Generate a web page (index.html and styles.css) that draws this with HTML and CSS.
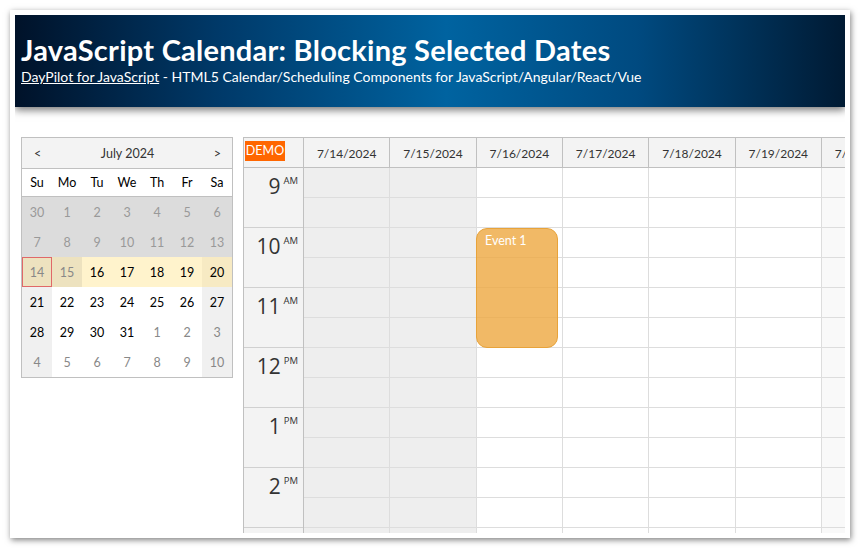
FILE: index.html
```html
<!DOCTYPE html>
<html>
<head>
<meta charset="utf-8">
<link rel="stylesheet" href="styles.css">
</head>
<body>
<div class="frame">
  <div class="viewport">
    <header class="header">
      <h1 class="title">JavaScript Calendar: Blocking Selected Dates</h1>
      <div class="subtitle"><a href="#">DayPilot for JavaScript</a> - HTML5 Calendar/Scheduling Components for JavaScript/Angular/React/Vue</div>
    </header>
    <main class="main">
      <div class="nav">
        <div class="nav-title"><span>&lt;</span><span>July 2024</span><span>&gt;</span></div>
        <div class="nav-days">
          <span>Su</span><span>Mo</span><span>Tu</span><span>We</span><span>Th</span><span>Fr</span><span>Sa</span>
        </div>
        <div class="nav-grid">
          <span class="dis">30</span><span class="dis">1</span><span class="dis">2</span><span class="dis">3</span><span class="dis">4</span><span class="dis">5</span><span class="dis">6</span>
          <span class="dis">7</span><span class="dis">8</span><span class="dis">9</span><span class="dis">10</span><span class="dis">11</span><span class="dis">12</span><span class="dis">13</span>
          <span class="sel-past today">14</span><span class="sel-past">15</span><span class="sel">16</span><span class="sel">17</span><span class="sel">18</span><span class="sel">19</span><span class="sel-we">20</span>
          <span class="we">21</span><span>22</span><span>23</span><span>24</span><span>25</span><span>26</span><span class="we">27</span>
          <span class="we">28</span><span>29</span><span>30</span><span>31</span><span class="other">1</span><span class="other">2</span><span class="we other">3</span>
          <span class="we other">4</span><span class="other">5</span><span class="other">6</span><span class="other">7</span><span class="other">8</span><span class="other">9</span><span class="we other">10</span>
        </div>
      </div>
      <div class="cal">
        <div class="cal-head">
          <div class="corner"><span class="demo">DEMO</span></div>
          <div class="colhead">7/14/2024</div>
          <div class="colhead">7/15/2024</div>
          <div class="colhead">7/16/2024</div>
          <div class="colhead">7/17/2024</div>
          <div class="colhead">7/18/2024</div>
          <div class="colhead">7/19/2024</div>
          <div class="colhead">7/20/2024</div>
        </div>
        <div class="cal-body">
          <div class="times">
            <div class="hour"><span class="h">9</span><span class="ap">AM</span></div>
            <div class="hour"><span class="h">10</span><span class="ap">AM</span></div>
            <div class="hour"><span class="h">11</span><span class="ap">AM</span></div>
            <div class="hour"><span class="h">12</span><span class="ap">PM</span></div>
            <div class="hour"><span class="h">1</span><span class="ap">PM</span></div>
            <div class="hour"><span class="h">2</span><span class="ap">PM</span></div>
            <div class="hour"><span class="h">3</span><span class="ap">PM</span></div>
          </div>
          <div class="day blocked"><i></i><i></i><i></i><i></i><i></i><i></i><i></i><i></i><i></i><i></i><i></i><i></i><i></i><i></i></div>
          <div class="day blocked"><i></i><i></i><i></i><i></i><i></i><i></i><i></i><i></i><i></i><i></i><i></i><i></i><i></i><i></i></div>
          <div class="day"><i></i><i></i><i></i><i></i><i></i><i></i><i></i><i></i><i></i><i></i><i></i><i></i><i></i><i></i>
            <div class="event">Event 1</div>
          </div>
          <div class="day"><i></i><i></i><i></i><i></i><i></i><i></i><i></i><i></i><i></i><i></i><i></i><i></i><i></i><i></i></div>
          <div class="day"><i></i><i></i><i></i><i></i><i></i><i></i><i></i><i></i><i></i><i></i><i></i><i></i><i></i><i></i></div>
          <div class="day"><i></i><i></i><i></i><i></i><i></i><i></i><i></i><i></i><i></i><i></i><i></i><i></i><i></i><i></i></div>
          <div class="day weekend"><i></i><i></i><i></i><i></i><i></i><i></i><i></i><i></i><i></i><i></i><i></i><i></i><i></i><i></i></div>
        </div>
      </div>
    </main>
  </div>
</div>
</body>
</html>
```

FILE: styles.css
```css
* { box-sizing: border-box; }
html, body { margin: 0; padding: 0; background: #fff; }
body { font-family: "Lato", "Open Sans", sans-serif; color: #333; }

.frame {
  margin: 10px;
  width: 840px;
  height: 528px;
  padding: 5px;
  background: #fff;
  box-shadow: 1px 2px 6px rgba(0,0,0,0.5);
}
.viewport {
  width: 830px;
  height: 518px;
  overflow: hidden;
}

.header {
  position: relative;
  z-index: 1;
  height: 92px;
  padding: 17px 0 0 6px;
  color: #fff;
  background: linear-gradient(90deg, #001229 0%, #003a6a 25%, #0063a0 52%, #004a80 75%, #001a33 100%);
  box-shadow: 0 3px 8px rgba(0,0,0,0.55);
}
.title {
  margin: 0;
  font-size: 29px;
  line-height: 35px;
  font-weight: 700;
  letter-spacing: 0.25px;
}
.subtitle {
  margin-top: 1px;
  font-size: 14px;
  line-height: 18px;
}
.subtitle a { color: #fff; }

.main {
  display: flex;
  align-items: flex-start;
  gap: 10px;
  padding: 30px 0 0 6px;
}

/* navigator */
.nav {
  width: 212px;
  border: 1px solid #c0c0c0;
  font-size: 12.5px;
}
.nav-title {
  height: 31px;
  display: flex;
  align-items: center;
  justify-content: space-between;
  padding: 0 11px 0 12px;
  background: #f3f3f3;
  border-bottom: 1px solid #c0c0c0;
  color: #333;
}
.nav-days {
  display: grid;
  grid-template-columns: repeat(7, 30px);
  height: 28px;
  border-bottom: 1px solid #c0c0c0;
  background: #fff;
}
.nav-days span, .nav-grid span {
  display: flex;
  align-items: center;
  justify-content: center;
}
.nav-days span { color: #000; }
.nav-grid {
  display: grid;
  grid-template-columns: repeat(7, 30px);
  grid-auto-rows: 30px;
}
.nav-grid span { background: #fff; color: #000; }
.nav-grid span.we { background: #f0f0f0; }
.nav-grid span.other { color: #888; }
.nav-grid span.dis { background: #dcdcdc; color: #999; }
.nav-grid span.sel { background: #fff3cc; }
.nav-grid span.sel-we { background: #f7eac3; }
.nav-grid span.sel-past { background: #ede2bf; color: #888; }
.nav-grid span.today { box-shadow: inset 0 0 0 1px #e06868; }

/* calendar */
.cal {
  flex: none;
  border-top: 1px solid #c0c0c0;
  border-left: 1px solid #c0c0c0;
}
.cal-head {
  display: flex;
  height: 30px;
}
.corner {
  flex: none;
  width: 60px;
  height: 30px;
  background: #f3f3f3;
  border-right: 1px solid #c0c0c0;
  border-bottom: 1px solid #c0c0c0;
  padding: 1px 0 0 1px;
}
.demo {
  display: inline-block;
  width: 40px;
  text-align: center;
  background: #ff6600;
  color: #fff;
  font-size: 12.5px;
  line-height: 20px;
}
.colhead {
  flex: none;
  width: 86.33px;
  height: 30px;
  background: #f3f3f3;
  border-right: 1px solid #c0c0c0;
  border-bottom: 1px solid #c0c0c0;
  display: flex;
  align-items: center;
  justify-content: center;
  padding-top: 1px;
  font-size: 12px;
  color: #333;
}
.cal-body { display: flex; }
.times {
  flex: none;
  width: 60px;
  background: #f3f3f3;
  border-right: 1px solid #c0c0c0;
}
.hour {
  height: 60px;
  border-bottom: 1px solid #d0d0d0;
  display: flex;
  justify-content: flex-end;
  align-items: flex-start;
  padding: 6px 5px 0 0;
  color: #333;
  font-family: "Open Sans", "Lato", sans-serif;
}
.hour .h { font-size: 21px; line-height: 24px; }
.hour .ap { font-size: 9.5px; line-height: 12px; margin-left: 3px; padding-top: 1px; }

.day {
  position: relative;
  flex: none;
  width: 86.33px;
  background: #fff;
}
.day.blocked { background: #eeeeee; }
.day.weekend { background: #f9f9f9; }
.day i {
  display: block;
  height: 30px;
  border-right: 1px solid #dddddd;
  border-bottom: 1px solid #dddddd;
}
.event {
  position: absolute;
  left: -0.66px;
  top: 60px;
  width: 82px;
  height: 120px;
  background: rgba(238, 170, 68, 0.82);
  border: 1px solid #e8a33a;
  border-radius: 11px;
  color: #fff;
  font-size: 12.5px;
  padding: 4px 8px;
}
```
